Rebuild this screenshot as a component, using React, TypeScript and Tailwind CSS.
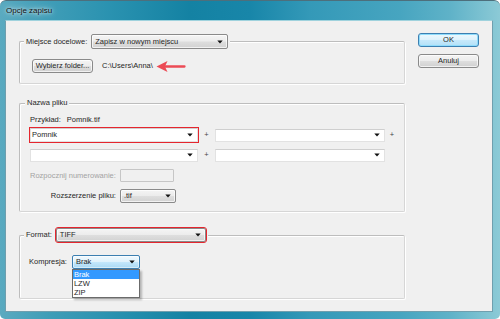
import React from "react";

function Tri() {
  return (
    <svg width="6" height="4" viewBox="0 0 6 4" className="shrink-0">
      <path d="M0.3 0.4h5.4L3 3.6z" fill="#111" />
    </svg>
  );
}

function DropBtn({ className, text }: { className: string; text: string }) {
  return (
    <div
      className={
        "flex items-center justify-between pl-[3px] pr-[4px] rounded-[2px] border border-[#8a8a8a] bg-[linear-gradient(#f4f4f4_0%,#ececec_48%,#dedede_52%,#d2d2d2_100%)] shadow-[inset_0_0_0_1px_rgba(255,255,255,0.7)] " +
        className
      }
    >
      <span className="leading-none">{text}</span>
      <Tri />
    </div>
  );
}

function Combo({ className, text }: { className: string; text?: string }) {
  return (
    <div
      className={
        "flex items-center justify-between pl-[1px] pr-[4px] bg-white border border-[#e2e2e2] border-t-[#cfcfcf] " +
        className
      }
    >
      <span className="leading-none">{text ?? ""}</span>
      <Tri />
    </div>
  );
}

function Btn({ text, def }: { text: string; def?: boolean }) {
  return (
    <div
      className={
        def
          ? "w-[61px] h-[14px] flex items-center justify-center rounded-[3px] border border-[#3c7fb1] bg-[linear-gradient(#eef8fd_0%,#ddf2fc_48%,#c6e9fb_52%,#b3e0f7_100%)] shadow-[inset_0_0_0_1px_#8fdcfb]"
          : "w-[61px] h-[14px] flex items-center justify-center rounded-[3px] border border-[#8a8a8a] bg-[linear-gradient(#f4f4f4_0%,#ececec_48%,#dedede_52%,#d0d0d0_100%)] shadow-[inset_0_0_0_1px_rgba(255,255,255,0.7)]"
      }
    >
      <span className="leading-none">{text}</span>
    </div>
  );
}

const groupCls =
  "w-[386px] border border-[#bdbdbd] border-r-[#d6d6d6] border-b-[#d6d6d6] rounded-[2px] shadow-[inset_1px_1px_0_#fff,1px_1px_0_#fff]";

export default function App() {
  return (
    <div className="w-[500px] h-[319px] overflow-hidden rounded-t-[6px] rounded-b-[5px] flex flex-col font-['Liberation_Sans',Arial,sans-serif] text-[7.5px] text-[#262626] bg-[linear-gradient(90deg,#5aaac0_0%,#3f9db7_10%,#2a92b0_22%,#1482a3_38%,#1886a9_50%,#3499b8_62%,#47a5c0_80%,#5fb2c8_90%,#8ccad6_100%)] px-[5px] pb-[7px] border-t border-[#4d6f7c]">
      {/* title bar */}
      <div className="h-[19px] flex items-center pl-[1px] shrink-0">
        <span className="text-[8px] text-[#101010] leading-none [text-shadow:0_0_6px_rgba(255,255,255,0.9),0_0_3px_rgba(255,255,255,0.8)]">
          Opcje zapisu
        </span>
      </div>
      {/* content */}
      <div className="flex-1 flex bg-[#f0f0f0] border border-[#6f9fae] border-t-[#9fd2dd] mr-[2px]">
        {/* left column */}
        <div className="pl-[13px] pt-[20px] flex flex-col">
          {/* group 1 */}
          <div className={groupCls}>
            <div className="mt-[-8px] ml-[4px] w-fit px-[2px] bg-[#f0f0f0] flex items-center h-[15px] gap-[4px]">
              <span className="leading-none whitespace-nowrap">Miejsce docelowe:</span>
              <DropBtn className="w-[137px] h-[15px]" text="Zapisz w nowym miejscu" />
            </div>
            <div className="mt-[10px] mb-[10px] ml-[12px] flex items-center h-[14px]">
              <Btn text="Wybierz folder..." />
              <span className="ml-[9px] leading-none">C:\Users\Anna\</span>
              <svg width="30" height="13" viewBox="0 0 30 13" className="ml-[3px]">
                <path d="M0.5 6.5 L11.5 1 L9 6.5 L11.5 12 Z" fill="#ec4b55" />
                <path d="M8 6.5 H28.5" stroke="#ec4b55" strokeWidth="2.3" strokeLinecap="round" />
              </svg>
            </div>
          </div>

          {/* group 2 */}
          <div className={groupCls + " mt-[19px]"}>
            <div className="mt-[-6px] ml-[5px] w-fit px-[2px] bg-[#f0f0f0] h-[10px] flex items-center leading-none whitespace-nowrap">
              Nazwa pliku
            </div>
            <div className="pl-[10px] pb-[8px]">
              <div className="mt-[6px] h-[11px] flex items-center leading-none">
                <span>Przykład:</span>
                <span className="ml-[6px]">Pomnik.tif</span>
              </div>
              <div className="mt-[3px] h-[14px] flex items-center">
                <Combo
                  className="w-[168px] h-[14px] outline-[1.5px] outline-solid outline-[#e5262e] outline-offset-[0px]"
                  text="Pomnik"
                />
                <span className="w-[17px] text-center leading-none text-[#444]">+</span>
                <Combo className="w-[170px] h-[13px]" />
                <span className="w-[14px] text-center leading-none text-[#444]">+</span>
              </div>
              <div className="mt-[6px] h-[14px] flex items-center">
                <Combo className="w-[168px] h-[13px]" />
                <span className="w-[17px] text-center leading-none text-[#444]">+</span>
                <Combo className="w-[170px] h-[13px]" />
              </div>
              <div className="mt-[7px] grid grid-cols-[auto_auto] gap-x-[4px] gap-y-[7px] items-center justify-start">
                <span className="text-right leading-none whitespace-nowrap text-[#a3a3a3]">Rozpocznij numerowanie:</span>
                <div className="w-[54px] h-[13px] border border-[#c6c6c6] rounded-[1px] bg-[#f0f0f0]" />
                <span className="text-right leading-none whitespace-nowrap">Rozszerzenie pliku:</span>
                <DropBtn className="w-[56px] h-[14px]" text=".tif" />
              </div>
            </div>
          </div>

          {/* group 3 */}
          <div className={groupCls + " mt-[23px]"}>
            <div className="mt-[-8px] ml-[4px] w-fit px-[2px] bg-[#f0f0f0] flex items-center h-[14px] gap-[4px]">
              <span className="leading-none">Format:</span>
              <DropBtn
                className="w-[150px] h-[14px] outline-[1.5px] outline-solid outline-[#e5262e] outline-offset-[0px]"
                text="TIFF"
              />
            </div>
            <div className="mt-[13px] mb-[29px] ml-[9px] flex items-center h-[14px]">
              <span className="leading-none">Kompresja:</span>
              <div className="relative ml-[5px]">
                <div className="w-[68px] h-[14px] flex items-center justify-between pl-[3px] pr-[4px] rounded-[2px] border border-[#3c7fb1] bg-[linear-gradient(#f1f9fe_0%,#dff2fc_48%,#c4e7fb_52%,#a9d9f4_100%)] shadow-[inset_0_0_0_1px_rgba(255,255,255,0.5)]">
                  <span className="leading-none">Brak</span>
                  <Tri />
                </div>
                <div className="absolute left-0 top-full w-[68px] bg-white border border-[#6b6b6b] shadow-[2px_2px_2px_rgba(0,0,0,0.25)] flex flex-col">
                  <div className="h-[9px] flex items-center pl-[1px] bg-[#3399ff] text-white leading-none">Brak</div>
                  <div className="h-[9px] flex items-center pl-[1px] leading-none">LZW</div>
                  <div className="h-[9px] flex items-center pl-[1px] leading-none">ZIP</div>
                </div>
              </div>
            </div>
          </div>
        </div>

        {/* right column */}
        <div className="ml-[13px] pt-[12px] flex flex-col gap-[7px]">
          <Btn text="OK" def />
          <Btn text="Anuluj" />
        </div>
      </div>
    </div>
  );
}
